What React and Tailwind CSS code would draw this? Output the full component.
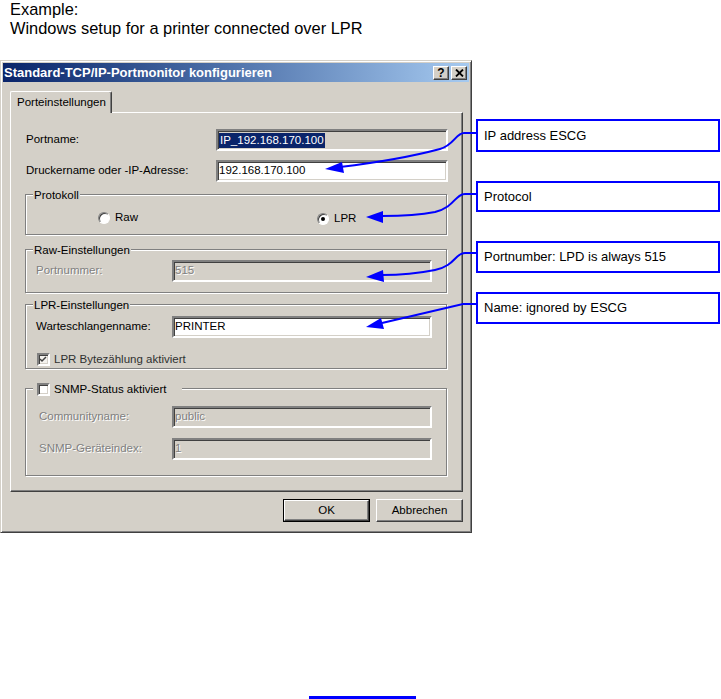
import React from 'react';

const sunken = 'border-2 border-t-[#808080] border-l-[#808080] border-r-white border-b-white shadow-[inset_1px_1px_0_#404040,inset_-1px_-1px_0_#d4d0c8]';
const raised = 'border border-t-white border-l-white border-r-[#404040] border-b-[#404040] shadow-[inset_-1px_-1px_0_#808080]';
const etched = 'border border-[#808080] shadow-[1px_1px_0_#fff,inset_1px_1px_0_#fff]';
const disabledText = 'text-[#808080] [text-shadow:1px_1px_0_#fff]';

const Field = ({ value, white, disabled, className = '', children }) => (
  <div className={`${sunken} h-[22px] flex items-center pl-[1px] ${white ? 'bg-white' : 'bg-[#d4d0c8]'} ${className}`}>
    {children ?? <span className={disabled ? disabledText : 'text-black'}>{value}</span>}
  </div>
);

const Group = ({ legend, className = '', children }) => (
  <div className={`relative ${etched} w-[422px] ${className}`}>
    <div className="absolute -top-[8px] left-[7px] px-[1px] bg-[#d4d0c8] flex items-center">{legend}</div>
    {children}
  </div>
);

const Radio = ({ checked }) => (
  <div className="w-[12px] h-[12px] rounded-full bg-white border border-t-[#808080] border-l-[#808080] border-r-white border-b-white shadow-[inset_1px_1px_0_#404040] flex items-center justify-center">
    {checked && <div className="w-[4px] h-[4px] rounded-full bg-black" />}
  </div>
);

const Checkbox = ({ checked, gray }) => (
  <div className={`${sunken} w-[13px] h-[13px] flex items-center justify-center ${gray ? 'bg-[#f4f2ee]' : 'bg-white'}`}>
    {checked && (
      <svg width="7" height="7" viewBox="0 0 7 7">
        <path d="M0 3 L2 5 L6 1" stroke="#404040" strokeWidth="1.5" fill="none" />
      </svg>
    )}
  </div>
);

const Callout = ({ top, height, text }) => (
  <div
    className="absolute left-[476px] w-[244px] border-2 border-[#0000ff] bg-white flex items-center pl-[6px] text-[13px] text-black"
    style={{ top, height }}
  >
    {text}
  </div>
);

export default function App() {
  return (
    <div className="relative w-[721px] h-[699px] bg-white overflow-hidden font-['Liberation_Sans',Arial,sans-serif]">
      <div className="pl-[10px] text-[16.4px] leading-[19px] text-black">
        <div>Example:</div>
        <div>Windows setup for a printer connected over LPR</div>
      </div>

      {/* dialog window */}
      <div className="mt-[22px] w-[472px] h-[473px] bg-[#d4d0c8] border border-t-[#d4d0c8] border-l-[#d4d0c8] border-r-[#404040] border-b-[#404040] shadow-[inset_1px_1px_0_#fff,inset_-1px_-1px_0_#808080] p-[2px] text-[11.5px] text-black">
        <div className="h-[19px] bg-gradient-to-r from-[#0a246a] to-[#a6caf0] flex items-center justify-between pl-[1px] pr-[2px]">
          <span className="text-white font-bold text-[13px]">Standard-TCP/IP-Portmonitor konfigurieren</span>
          <div className="flex gap-[2px]">
            <div className={`${raised} bg-[#d4d0c8] w-[16px] h-[14px] flex items-center justify-center text-[12px] font-bold leading-none`}>?</div>
            <div className={`${raised} bg-[#d4d0c8] w-[16px] h-[14px] flex items-center justify-center`}>
              <svg width="9" height="8" viewBox="0 0 9 8">
                <path d="M1 0.5 L8 7.5 M8 0.5 L1 7.5" stroke="#000" strokeWidth="1.8" />
              </svg>
            </div>
          </div>
        </div>

        <div className="pl-[7px] pt-[9px]">
          {/* tab */}
          <div className="h-[21px] flex">
            <div className="w-[102px] h-[22px] bg-[#d4d0c8] border-l border-t border-r border-l-white border-t-white border-r-[#404040] rounded-t-[2px] shadow-[inset_-1px_0_0_#808080] flex items-center pl-[6px] relative z-10">
              Porteinstellungen
            </div>
          </div>

          {/* panel */}
          <div className="w-[453px] h-[380px] border border-t-white border-l-white border-r-[#404040] border-b-[#404040] shadow-[inset_-1px_-1px_0_#808080] pl-[14px] pt-[16px]">
            <div className="flex items-center h-[22px]">
              <div className="w-[191px] pl-[1px]">Portname:</div>
              <Field className="w-[232px]">
                <span className="bg-[#0a246a] text-white px-[1px] leading-[15px]">IP_192.168.170.100</span>
              </Field>
            </div>
            <div className="flex items-center h-[22px] mt-[9px]">
              <div className="w-[191px] pl-[1px]">Druckername oder -IP-Adresse:</div>
              <Field white value="192.168.170.100" className="w-[232px]" />
            </div>

            <Group legend={<span>Protokoll</span>} className="h-[41px] mt-[12px]">
              <div className="flex pl-[72px] pt-[13px]">
                <div className="w-[219px] flex items-center gap-[5px]">
                  <Radio />
                  <span>Raw</span>
                </div>
                <div className="flex items-center gap-[5px] mt-[2px]">
                  <Radio checked />
                  <span>LPR</span>
                </div>
              </div>
            </Group>

            <Group legend={<span>Raw-Einstellungen</span>} className="h-[44px] mt-[14px]">
              <div className="flex items-center pl-[10px] pt-[10px]">
                <div className={`w-[136px] ${disabledText}`}>Portnummer:</div>
                <Field disabled value="515" className="w-[260px]" />
              </div>
            </Group>

            <Group legend={<span>LPR-Einstellungen</span>} className="h-[65px] mt-[11px]">
              <div className="flex items-center pl-[10px] pt-[11px]">
                <div className="w-[136px]">Warteschlangenname:</div>
                <Field white value="PRINTER" className="w-[260px]" />
              </div>
              <div className="flex items-center gap-[4px] pl-[11px] mt-[13px]">
                <Checkbox checked gray />
                <span className="text-[#303030]">LPR Bytezählung aktiviert</span>
              </div>
            </Group>

            <Group
              legend={
                <div className="flex items-center gap-[4px] pl-[3px] pr-[15px]">
                  <Checkbox />
                  <span>SNMP-Status aktiviert</span>
                </div>
              }
              className="h-[88px] mt-[19px]"
            >
              <div className="flex items-center pl-[13px] pt-[17px]">
                <div className={`w-[133px] ${disabledText}`}>Communityname:</div>
                <Field disabled value="public" className="w-[260px]" />
              </div>
              <div className="flex items-center pl-[13px] mt-[10px]">
                <div className={`w-[133px] ${disabledText}`}>SNMP-Geräteindex:</div>
                <Field disabled value="1" className="w-[260px]" />
              </div>
            </Group>
          </div>

          {/* buttons */}
          <div className="w-[453px] flex justify-end gap-[6px] mt-[7px]">
            <div className="w-[87px] h-[23px] border border-black">
              <div className={`${raised} h-full flex items-center justify-center`}>OK</div>
            </div>
            <div className={`${raised} w-[87px] h-[23px] flex items-center justify-center`}>Abbrechen</div>
          </div>
        </div>
      </div>

      <div className="ml-[309px] mt-[163px] w-[107px] h-[3px] bg-[#0000ff]" />

      <Callout top={119} height={33} text="IP address ESCG" />
      <Callout top={181} height={31} text="Protocol" />
      <Callout top={241} height={32} text="Portnumber: LPD is always 515" />
      <Callout top={292} height={32} text="Name: ignored by ESCG" />

      <svg className="absolute inset-0 pointer-events-none" width="721" height="699">
        <g stroke="#0000ff" strokeWidth="2" fill="none">
          <path d="M476 133 L464 133 C456 133 454 145 440 149 C410 157 365 164 340 167" />
          <path d="M476 194 L465 194 C455 194 455 207 435 212 C420 215 400 216 382 216" />
          <path d="M476 253 L465 253 C455 253 455 266 435 270 C420 273 400 275 382 275" />
          <path d="M476 304 L463 304 L382 323" />
        </g>
        <g fill="#0000ff">
          <polygon points="325,169 342,162 344,173" />
          <polygon points="366,217 383,211 383,223" />
          <polygon points="366,277 383,270 384,282" />
          <polygon points="366,327 381,318 384,329" />
        </g>
      </svg>
    </div>
  );
}
